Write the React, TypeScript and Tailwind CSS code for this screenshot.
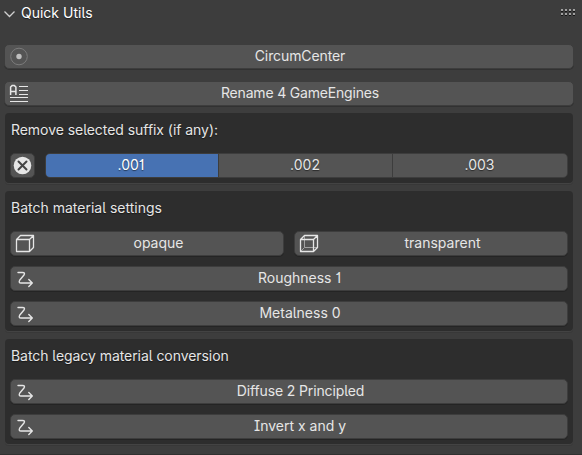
import type { ReactNode } from "react";

const ink = "#e6e6e6";

function DotIcon() {
  return (
    <svg width="20" height="20" viewBox="0 0 20 20" fill="none">
      <circle cx="10" cy="10.5" r="8.3" stroke="#7b7b7b" />
      <circle cx="10" cy="10.5" r="2.7" fill="#bebebe" />
    </svg>
  );
}

function RenameIcon() {
  return (
    <svg width="20" height="20" viewBox="0 0 20 20" fill="none" stroke={ink} strokeWidth="1.2">
      <path d="M1.6 12V4L3.1 2.6H5.4L6.9 4V12M1.6 8.5H6.9" strokeWidth="1.5" />
      <path d="M10 3.5H19M10 7.5H19M10 11.5H19M1 14.5H19M1 18.5H19" />
    </svg>
  );
}

function CancelIcon() {
  return (
    <svg width="19" height="19" viewBox="0 0 19 19" fill="none">
      <circle cx="9.5" cy="9.5" r="8.8" fill={ink} />
      <path d="M5.5 5.5L13.5 13.5M13.5 5.5L5.5 13.5" stroke="#444" strokeWidth="2" strokeLinecap="round" />
    </svg>
  );
}

function CubeIcon({ wire = false }: { wire?: boolean }) {
  return (
    <svg width="20" height="20" viewBox="0 0 20 20" fill="none" stroke={ink} strokeLinejoin="round">
      {wire && <path d="M5.5 2.5V14.5H18M5.5 14.5L2 18" stroke="#a2a2a2" />}
      <path d="M1.5 6.5H14.5V18.5H1.5ZM1.5 6.5L5.5 2.5H18.5V14.5L14.5 18.5M14.5 6.5L18.5 2.5" strokeWidth="1.3" />
    </svg>
  );
}

function ArrowIcon() {
  return (
    <svg width="20" height="20" viewBox="0 0 20 20" fill="none" stroke={ink} strokeWidth="1.4" strokeLinecap="round" strokeLinejoin="round">
      <path d="M3 4.5H7.5Q10.5 4.5 9 7L4.8 12Q3.2 15 6 15H17.3M13.8 11.5L17.3 15L13.8 18.5" />
    </svg>
  );
}

function Button({ icon, label, spacing = "pr-0.5" }: { icon: ReactNode; label: string; spacing?: string }) {
  return (
    <button className="flex h-[25px] w-full min-w-0 items-start rounded-[5px] border border-[#3d3d3d] bg-[#545454] pl-1 shadow-[0_1px_0_#00000030]">
      <span className="flex w-5 shrink-0 pt-px">{icon}</span>
      <span className={"flex-1 text-center leading-[22px] " + spacing}>{label}</span>
    </button>
  );
}

function Box({ title, spacing = "", children }: { title: string; spacing?: string; children: ReactNode }) {
  return (
    <section className="ml-[5px] mr-[9px] rounded-[4px] bg-[#2d2d2d] px-[5px] pb-[5px] shadow-[0_1px_0_#434343,0_2px_0_#383838]">
      <h2 className={"flex h-10 items-center pb-[6px] pl-px " + spacing}>{title}</h2>
      <div className="flex flex-col gap-[10px]">{children}</div>
    </section>
  );
}

export default function App() {
  return (
    <main
      className="flex h-[455px] w-[582px] flex-col overflow-hidden border-b border-[#303030] bg-[#3d3d3d] font-['Inter','Liberation_Sans',sans-serif] text-[14px] leading-5 text-[#e6e6e6] [font-feature-settings:'cv05','cv08','cv01'] [text-shadow:0_1px_1px_#00000080]"
    >
      <header className="flex h-[44px] shrink-0 items-start justify-between pl-[3px] pr-[6px] pt-[3px]">
        <div className="flex items-center text-white">
          <svg className="mr-[5px]" width="13" height="20" viewBox="0 0 13 20" fill="none" stroke="#d0d0d0" strokeWidth="1.3">
            <path d="M1.5 8.5L6.5 13.5L11.5 8.5" />
          </svg>
          <h1>Quick Utils</h1>
        </div>
        <svg className="mt-[6px]" width="15" height="7" viewBox="0 0 15 7" shapeRendering="crispEdges">
          {[0, 4, 8, 12].map((x) => (
            <g key={x}>
              <path d={`M${x} 0h2v2h-2zM${x} 4h2v2h-2z`} fill="#a0a0a0" />
              <path d={`M${x} 2h2v1h-2zM${x} 6h2v1h-2z`} fill="#161616" />
            </g>
          ))}
        </svg>
      </header>
      <div className="ml-1 mr-2 flex flex-col gap-3">
        <Button icon={<DotIcon />} label="CircumCenter" spacing="pr-0.5 tracking-[-0.1px]" />
        <Button icon={<RenameIcon />} label="Rename 4 GameEngines" spacing="pr-0.5 tracking-[-0.18px]" />
      </div>
      <div className="mt-[7px] flex flex-col gap-2">
        <Box title="Remove selected suffix (if any):" spacing="tracking-[-0.05px]">
          <div className="flex gap-[10px]">
            <button className="flex size-[25px] items-center justify-center rounded-[5px] border border-[#3d3d3d] bg-[#545454]">
              <CancelIcon />
            </button>
            <div className="grid h-[25px] flex-1 grid-cols-[172px_173px_1fr] gap-px overflow-hidden rounded-[5px] border border-[#3d3d3d] bg-[#3d3d3d] text-center leading-[22px]">
              <span className="bg-[#4772b3] pr-0.5 text-white">.001</span>
              <span className="bg-[#545454] pr-px">.002</span>
              <span className="bg-[#545454] pr-px">.003</span>
            </div>
          </div>
        </Box>
        <Box title="Batch material settings">
          <div className="flex gap-[10px]">
            <Button icon={<CubeIcon />} label="opaque" spacing="pr-px" />
            <Button icon={<CubeIcon wire />} label="transparent" spacing="pr-px" />
          </div>
          <Button icon={<ArrowIcon />} label="Roughness 1" spacing="pr-[3px]" />
          <Button icon={<ArrowIcon />} label="Metalness 0" />
        </Box>
        <Box title="Batch legacy material conversion" spacing="tracking-[-0.06px]">
          <Button icon={<ArrowIcon />} label="Diffuse 2 Principled" spacing="pr-px tracking-[-0.13px]" />
          <Button icon={<ArrowIcon />} label="Invert x and y" />
        </Box>
      </div>
    </main>
  );
}
